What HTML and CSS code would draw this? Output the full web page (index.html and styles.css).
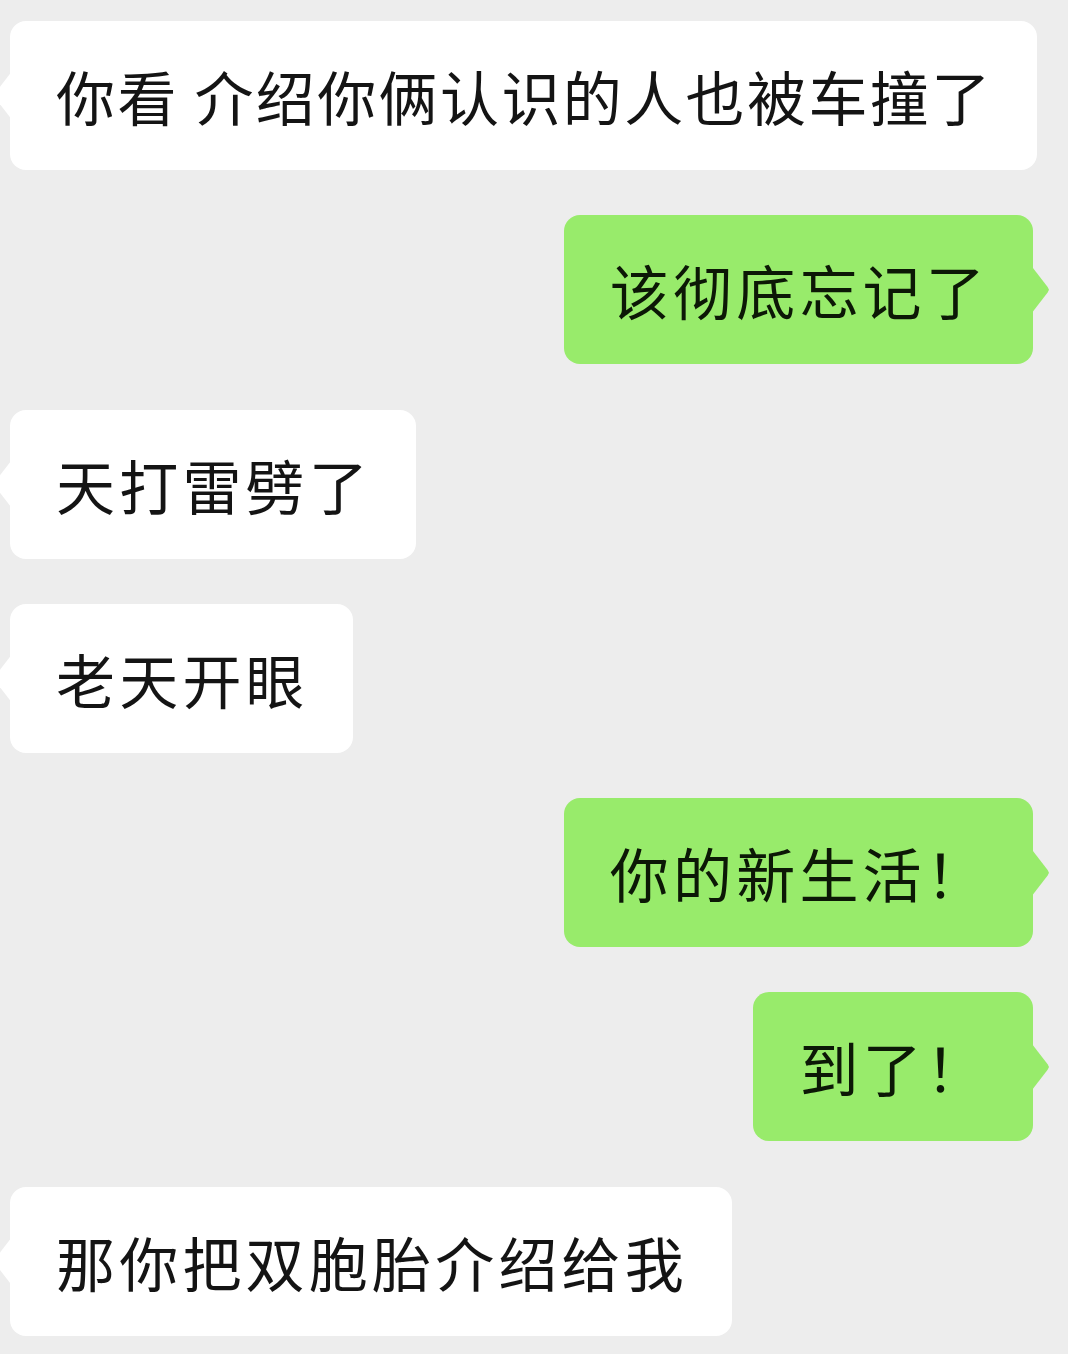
FILE: index.html
```html
<!DOCTYPE html>
<html lang="zh-CN">
<head>
  <meta charset="UTF-8" />
  <meta name="viewport" content="width=device-width, initial-scale=1.0"/>
  <title>聊天记录</title>
  <link rel="stylesheet" href="styles.css">
</head>
<body>
  <div class="chat">
    <div class="msg them tight">你看 介绍你俩认识的人也被车撞了</div>
    <div class="msg me">该彻底忘记了</div>
    <div class="msg them">天打雷劈了</div>
    <div class="msg them">老天开眼</div>
    <div class="msg me">你的新生活！</div>
    <div class="msg me">到了！</div>
    <div class="msg them">那你把双胞胎介绍给我</div>
  </div>
</body>
</html>
```

FILE: styles.css
```css
body {
  margin: 0;
  background-color: #ededed;
  font-family: "Noto Sans CJK SC", "Noto Sans", sans-serif;
  color: #141414;
  overflow: hidden;
}

.chat {
  display: flex;
  flex-direction: column;
  gap: 45.3px;
  padding: 21px 35px 18px 10px;
}

.msg {
  position: relative;
  font-size: 59px;
  line-height: 69px;
  letter-spacing: 4.2px;
  padding: 40px 44px 40px 46px;
  border-radius: 16px;
  white-space: nowrap;
}

.msg::before {
  content: "";
  position: absolute;
  top: 50%;
  width: 17px;
  height: 46px;
  margin-top: -23px;
  background: inherit;
}

.them {
  align-self: flex-start;
  background: #fff;
}

.them::before {
  left: -16px;
  clip-path: polygon(100% 0, 8% 44%, 0 50%, 8% 56%, 100% 100%);
}

.me {
  align-self: flex-end;
  background: #98eb6b;
  color: #0c1806;
}

.me::before {
  right: -16px;
  clip-path: polygon(0 0, 92% 44%, 100% 50%, 92% 56%, 0 100%);
}

.tight {
  letter-spacing: 2.4px;
}
```
